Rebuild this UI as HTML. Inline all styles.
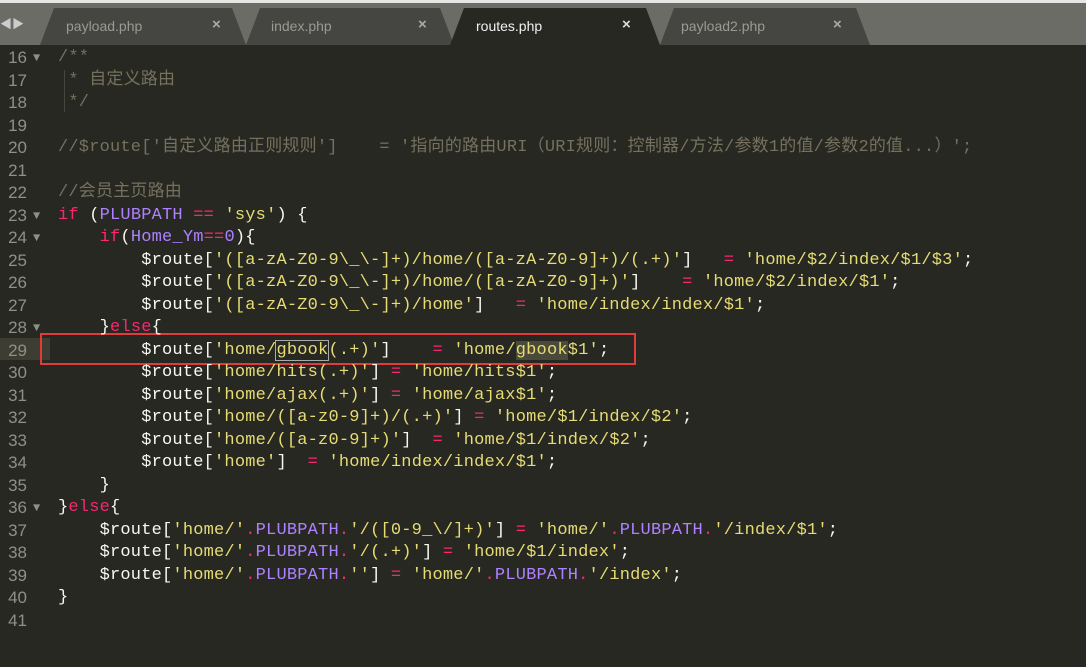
<!DOCTYPE html>
<html><head><meta charset="utf-8"><style>
*{margin:0;padding:0}
body{width:1086px;height:667px;background:#272822;overflow:hidden;position:relative;font-family:"Liberation Mono","Noto Sans CJK SC",monospace}
#top{position:absolute;left:0;top:0;width:1086px;height:3px;background:#e6e6e4}
#bar{position:absolute;left:0;top:3px;width:1086px;height:42px;background:#6b6c66}
.tab{position:absolute;top:8px;height:37px;background:#454641;clip-path:polygon(0 100%,14px 0,calc(100% - 14px) 0,100% 100%);font-family:"Liberation Sans",sans-serif;font-size:14px;color:#9a9a95}
.tab span{position:absolute;top:10px}
.tab b{position:absolute;top:8px;font-size:15px;color:#aaa}
.act{background:#272822;color:#f0f0f0}
.act b{color:#ddd}
.ln{position:absolute;left:0;width:27px;text-align:right;color:#8f908a;font-size:17px;line-height:22px;height:22px;font-family:"Liberation Sans",sans-serif}
.fa{position:absolute;left:33px;color:#8f908a;font-size:12px;line-height:22px}
.code{position:absolute;left:58px;white-space:pre;color:#f8f8f2;font-size:17px;line-height:22px;height:22px;letter-spacing:0.2px}
.code span{line-height:22px}
.c{color:#75715e}.s{color:#e6db74}.k{color:#f92672}.p{color:#ae81ff}
</style></head><body>
<div id="top"></div><div id="bar"></div>
<div style="position:absolute;left:0;top:15px;color:#ccc;font-size:12px">◀▶</div>
<div class="tab" style="left:40px;width:206px"><span style="left:26px">payload.php</span><b style="left:172px">×</b></div>
<div class="tab" style="left:246px;width:208px"><span style="left:25px">index.php</span><b style="left:172px">×</b></div>
<div class="tab" style="left:660px;width:210px"><span style="left:21px">payload2.php</span><b style="left:173px">×</b></div>
<div class="tab act" style="left:450px;width:210px"><span style="left:26px">routes.php</span><b style="left:172px">×</b></div>
<div style="position:absolute;left:0;top:338px;width:50px;height:22px;background:#3e3d32"></div>
<div style="position:absolute;left:64px;top:70px;width:1px;height:42px;background:#45463f"></div>
<div style="position:absolute;left:40px;top:333px;width:592px;height:28px;border:2px solid #e03c3c"></div>
<div id="L"></div>
<script>
var lines=[
['<span class="c">/**</span>',1],
['<span class="c"> * 自定义路由</span>'],
['<span class="c"> */</span>'],
[''],
['<span class="c">//$route[\'自定义路由正则规则\']    = \'指向的路由URI（URI规则：控制器/方法/参数1的值/参数2的值...）\';</span>'],
[''],
['<span class="c">//会员主页路由</span>'],
['<span class="k">if</span> (<span class="p">PLUBPATH</span> <span class="k">==</span> <span class="s">\'sys\'</span>) {',1],
['    <span class="k">if</span>(<span class="p">Home_Ym</span><span class="k">==</span><span class="p">0</span>){',1],
['        $route[<span class="s">\'([a-zA-Z0-9\\_\\-]+)/home/([a-zA-Z0-9]+)/(.+)\'</span>]   <span class="k">=</span> <span class="s">\'home/$2/index/$1/$3\'</span>;'],
['        $route[<span class="s">\'([a-zA-Z0-9\\_\\-]+)/home/([a-zA-Z0-9]+)\'</span>]    <span class="k">=</span> <span class="s">\'home/$2/index/$1\'</span>;'],
['        $route[<span class="s">\'([a-zA-Z0-9\\_\\-]+)/home\'</span>]   <span class="k">=</span> <span class="s">\'home/index/index/$1\'</span>;'],
['    }<span class="k">else</span>{',1],
['        $route[<span class="s">\'home/<span style="outline:1px solid #aaa">gbook</span>(.+)\'</span>]    <span class="k">=</span> <span class="s">\'home/<span style="background:#4a4a3a">gbook</span>$1\'</span>;'],
['        $route[<span class="s">\'home/hits(.+)\'</span>] <span class="k">=</span> <span class="s">\'home/hits$1\'</span>;'],
['        $route[<span class="s">\'home/ajax(.+)\'</span>] <span class="k">=</span> <span class="s">\'home/ajax$1\'</span>;'],
['        $route[<span class="s">\'home/([a-z0-9]+)/(.+)\'</span>] <span class="k">=</span> <span class="s">\'home/$1/index/$2\'</span>;'],
['        $route[<span class="s">\'home/([a-z0-9]+)\'</span>]  <span class="k">=</span> <span class="s">\'home/$1/index/$2\'</span>;'],
['        $route[<span class="s">\'home\'</span>]  <span class="k">=</span> <span class="s">\'home/index/index/$1\'</span>;'],
['    }'],
['}<span class="k">else</span>{',1],
['    $route[<span class="s">\'home/\'</span><span class="k">.</span><span class="p">PLUBPATH</span><span class="k">.</span><span class="s">\'/([0-9_\\/]+)\'</span>] <span class="k">=</span> <span class="s">\'home/\'</span><span class="k">.</span><span class="p">PLUBPATH</span><span class="k">.</span><span class="s">\'/index/$1\'</span>;'],
['    $route[<span class="s">\'home/\'</span><span class="k">.</span><span class="p">PLUBPATH</span><span class="k">.</span><span class="s">\'/(.+)\'</span>] <span class="k">=</span> <span class="s">\'home/$1/index\'</span>;'],
['    $route[<span class="s">\'home/\'</span><span class="k">.</span><span class="p">PLUBPATH</span><span class="k">.</span><span class="s">\'\'</span>] <span class="k">=</span> <span class="s">\'home/\'</span><span class="k">.</span><span class="p">PLUBPATH</span><span class="k">.</span><span class="s">\'/index\'</span>;'],
['}'],
['']];
var h='';
lines.forEach(function(l,i){var t=47+i*22.5;
h+='<div class="ln" style="top:'+t+'px">'+(16+i)+'</div>';
if(l[1])h+='<div class="fa" style="top:'+t+'px">▼</div>';
h+='<div class="code" style="top:'+t+'px">'+l[0]+'</div>';});
document.getElementById('L').innerHTML=h;
</script>
</body></html>
